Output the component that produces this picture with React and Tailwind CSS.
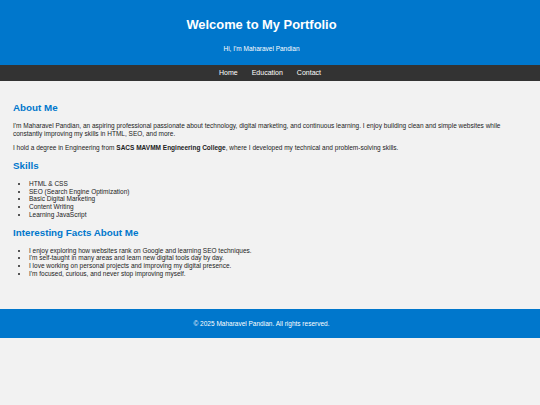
// Portfolio page: header, nav, about/skills/facts sections, footer
export default function App() {
  const skills = [
    "HTML & CSS",
    "SEO (Search Engine Optimization)",
    "Basic Digital Marketing",
    "Content Writing",
    "Learning JavaScript",
  ];
  const facts = [
    "I enjoy exploring how websites rank on Google and learning SEO techniques.",
    "I'm self-taught in many areas and learn new digital tools day by day.",
    "I love working on personal projects and improving my digital presence.",
    "I'm focused, curious, and never stop improving myself.",
  ];

  return (
    <div className="min-h-[405px] bg-[#f2f2f2] text-[#222] font-['Liberation_Sans',Arial,sans-serif]">
      {/* Header */}
      <header className="bg-[#0077cc] text-white text-center h-[65px] pt-[17px] pr-[17px]">
        <h1 className="text-[12.9px] leading-[16px] font-bold">Welcome to My Portfolio</h1>
        <p className="text-[6.5px] leading-[8px] mt-[12px]">Hi, I'm Maharavel Pandian</p>
      </header>

      {/* Nav */}
      <nav className="bg-[#333] h-[16px] flex items-center justify-center gap-[14px] text-white text-[7px] leading-[8px]">
        <a href="#">Home</a>
        <a href="#">Education</a>
        <a href="#">Contact</a>
      </nav>

      {/* Main */}
      <main className="pl-[13px] pr-[30px] pt-[21px] h-[228px]">
        <section>
          <h2 className="text-[9.8px] leading-[12px] font-bold text-[#0077cc]">About Me</h2>
          <p className="text-[6.5px] leading-[8px] mt-[8px]">
            I'm Maharavel Pandian, an aspiring professional passionate about technology, digital marketing, and continuous learning. I enjoy building clean and simple websites while constantly improving my skills in HTML, SEO, and more.
          </p>
          <p className="text-[6.5px] leading-[8px] mt-[6px]">
            I hold a degree in Engineering from <strong>SACS MAVMM Engineering College</strong>, where I developed my technical and problem-solving skills.
          </p>
        </section>

        <section className="mt-[8px]">
          <h2 className="text-[9.8px] leading-[12px] font-bold text-[#0077cc]">Skills</h2>
          <ul className="list-disc pl-[16px] mt-[8px] text-[6.5px] leading-[7.7px]">
            {skills.map((s) => (
              <li key={s}>{s}</li>
            ))}
          </ul>
        </section>

        <section className="mt-[8px]">
          <h2 className="text-[9.8px] leading-[12px] font-bold text-[#0077cc]">Interesting Facts About Me</h2>
          <ul className="list-disc pl-[16px] mt-[8px] text-[6.5px] leading-[7.7px]">
            {facts.map((f) => (
              <li key={f}>{f}</li>
            ))}
          </ul>
        </section>
      </main>

      {/* Footer */}
      <footer className="bg-[#0077cc] text-white text-center h-[29px] pr-[17px] flex items-center justify-center text-[6.5px] leading-[8px]">
        © 2025 Maharavel Pandian. All rights reserved.
      </footer>
    </div>
  );
}
